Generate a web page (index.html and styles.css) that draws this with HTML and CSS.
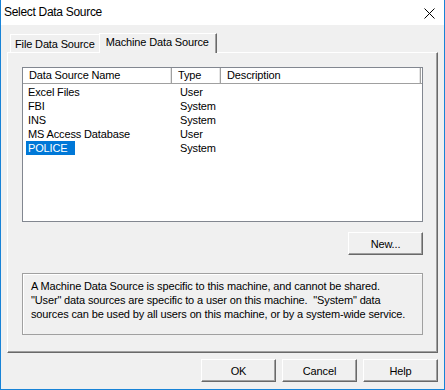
FILE: index.html
```html
<!DOCTYPE html>
<html lang="en">
<head>
    <meta charset="UTF-8">
    <title>Select Data Source</title>
    <link rel="stylesheet" href="styles.css">
</head>
<body>
    <div class="window">
        <div class="titlebar">
            <span class="title">Select Data Source</span>
            <svg class="close" width="11" height="11" viewBox="0 0 11 11">
                <path d="M0.5 0.5 L10.5 10.5 M10.5 0.5 L0.5 10.5" stroke="#000" stroke-width="1" fill="none"/>
            </svg>
        </div>
        <div class="client">
            <div class="tabs">
                <div class="tab">File Data Source</div>
                <div class="tab active">Machine Data Source</div>
            </div>
            <div class="panel">
                <div class="listview">
                    <div class="list-header">
                        <div class="col col-name">Data Source Name</div>
                        <div class="col col-type">Type</div>
                        <div class="col col-desc">Description</div>
                    </div>
                    <div class="row"><div class="cell cell-name"><span>Excel Files</span></div><div class="cell cell-type">User</div></div>
                    <div class="row"><div class="cell cell-name"><span>FBI</span></div><div class="cell cell-type">System</div></div>
                    <div class="row"><div class="cell cell-name"><span>INS</span></div><div class="cell cell-type">System</div></div>
                    <div class="row"><div class="cell cell-name"><span>MS Access Database</span></div><div class="cell cell-type">User</div></div>
                    <div class="row"><div class="cell cell-name"><span class="selected">POLICE</span></div><div class="cell cell-type">System</div></div>
                </div>
                <div class="new-row">
                    <button class="btn">New...</button>
                </div>
                <div class="info">
                    A Machine Data Source is specific to this machine, and cannot be shared.<br>
                    "User" data sources are specific to a user on this machine.&nbsp; "System" data<br>
                    sources can be used by all users on this machine, or by a system-wide service.
                </div>
            </div>
            <div class="buttons">
                <button class="btn">OK</button>
                <button class="btn">Cancel</button>
                <button class="btn">Help</button>
            </div>
        </div>
    </div>
</body>
</html>
```

FILE: styles.css
```css
* {
    box-sizing: border-box;
}

body {
    margin: 0;
    font-family: "Liberation Sans", Arial, sans-serif;
    font-size: 11px;
    letter-spacing: -0.14px;
    color: #000;
    background: #f0f0f0;
}

.window {
    width: 445px;
    height: 390px;
    border: 1px solid #1883d7;
    border-top: none;
    background: #f0f0f0;
    display: flex;
    flex-direction: column;
}

.titlebar {
    flex-shrink: 0;
    height: 25px;
    background: #ffffff;
    display: flex;
    align-items: center;
    justify-content: space-between;
    padding: 0 9px 0 3px;
}

.title {
    font-size: 12px;
    letter-spacing: -0.3px;
    padding-bottom: 1px;
}

.close {
    display: block;
    margin-top: 1px;
}

.client {
    flex: 1;
    padding: 8px 6px 0 6px;
}

.tabs {
    display: flex;
    align-items: flex-end;
    height: 19px;
    padding-left: 3px;
    position: relative;
    z-index: 1;
}

.tab {
    height: 18px;
    line-height: 18px;
    padding: 0 4px 0 4px;
    border-top: 1px solid #ffffff;
    border-left: 1px solid #ffffff;
    background: #f0f0f0;
}

.tab.active {
    height: 20px;
    line-height: 16px;
    margin-bottom: -1px;
    padding: 0 7px 0 6px;
    border-right: 1px solid #696969;
    box-shadow: inset -1px 0 #a0a0a0;
}

.panel {
    height: 301px;
    border: 1px solid;
    border-color: #ffffff #696969 #696969 #ffffff;
    box-shadow: inset -1px -1px #a0a0a0;
    padding: 14px 14px 0 14px;
}

.listview {
    height: 155px;
    border: 1px solid #828790;
    background: #ffffff;
}

.list-header {
    display: flex;
    height: 16px;
    line-height: 15px;
    border-bottom: 1px solid #a0a0a0;
    background: #ffffff;
}

.col {
    padding-left: 6px;
    border-right: 1px solid #a0a0a0;
    box-shadow: inset -1px 0 #e5e5e5;
}

.col-name {
    width: 149px;
}

.col-type {
    width: 49px;
}

.col-desc {
    flex: 1;
    margin-right: 1px;
}

.row {
    display: flex;
    height: 14px;
    line-height: 14px;
}

.row:nth-child(2) {
    margin-top: 1px;
}

.cell-name {
    width: 149px;
    padding-left: 3px;
}

.cell-name span {
    display: inline-block;
    padding: 0 4px 0 2px;
}

.cell-name .selected {
    background: #0078d7;
    color: #ffffff;
    padding-right: 7px;
}

.cell-type {
    padding-left: 8px;
}

.new-row {
    display: flex;
    justify-content: flex-end;
    margin-top: 10px;
}

.btn {
    width: 75px;
    height: 23px;
    padding: 0;
    font-family: "Liberation Sans", Arial, sans-serif;
    font-size: 11px;
    letter-spacing: -0.14px;
    color: #000;
    background: #f0f0f0;
    border: 1px solid;
    border-color: #ffffff #696969 #696969 #ffffff;
    box-shadow: inset -1px -1px #a0a0a0;
}

.info {
    margin-top: 18px;
    height: 62px;
    padding: 5px 0 0 8px;
    line-height: 14px;
    border: 1px solid #a0a0a0;
    box-shadow: inset 1px 1px #ffffff;
}

.buttons {
    display: flex;
    justify-content: flex-end;
    gap: 6px;
    margin-top: 6px;
}
```
